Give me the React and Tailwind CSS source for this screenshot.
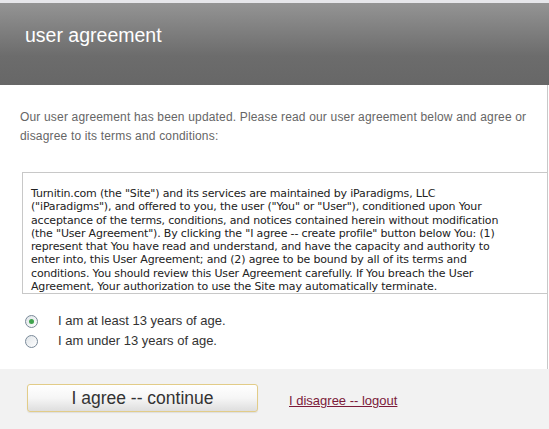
const agreementLines = [
  'Turnitin.com (the "Site") and its services are maintained by iParadigms, LLC',
  '("iParadigms"), and offered to you, the user ("You" or "User"), conditioned upon Your',
  'acceptance of the terms, conditions, and notices contained herein without modification',
  '(the "User Agreement"). By clicking the "I agree -- create profile" button below You: (1)',
  'represent that You have read and understand, and have the capacity and authority to',
  'enter into, this User Agreement; and (2) agree to be bound by all of its terms and',
  'conditions. You should review this User Agreement carefully. If You breach the User',
  'Agreement, Your authorization to use the Site may automatically terminate.',
]

const Radio = ({ checked }) => (
  <span className="w-[13px] h-[13px] rounded-full border border-[#7a8a99] bg-gradient-to-br from-[#dfe4e8] to-white flex items-center justify-center">
    {checked && <span className="w-[5px] h-[5px] rounded-full bg-[#3fa34d]" />}
  </span>
)

const App = () => {
  return (
    <div className="w-[549px] h-[429px] bg-white overflow-hidden font-['Liberation_Sans',Arial,sans-serif]">
      <div className="h-[3px] bg-[#e6e6ea]" />

      {/* Header */}
      <header className="h-[82px] bg-gradient-to-b from-[#949494] via-[#6c6c6c] via-65% to-[#676767] px-[25px] pt-[20px]">
        <h1 className="text-[19.5px] leading-[24px] text-white">user agreement</h1>
      </header>

      {/* Body */}
      <div className="w-[548px] border-r border-[#c8c8c8] h-[284px]">
        <p className="pl-[20px] pt-[23px] text-[12px] leading-[19px] tracking-[0.17px] text-[#666]">
          Our user agreement has been updated. Please read our user agreement below and agree or
          <br />
          disagree to its terms and conditions:
        </p>

        <div className="ml-[22px] mt-[26px] h-[122px] border-t border-l border-b border-[#c8c8c8] overflow-hidden pl-[8px] pt-[14px]">
          <div className="font-['DejaVu_Sans',Verdana,sans-serif] text-[11px] leading-[13.3px] text-[#222] whitespace-nowrap tracking-[-0.17px]">
            {agreementLines.map((line) => (
              <div key={line}>{line}</div>
            ))}
          </div>
        </div>

        <div className="mt-[20px] pl-[25px] flex flex-col gap-[6px] text-[13px] text-[#333]">
          <label className="flex items-center h-[14px]">
            <Radio checked />
            <span className="ml-[20px]">I am at least 13 years of age.</span>
          </label>
          <label className="flex items-center h-[14px]">
            <Radio />
            <span className="ml-[20px]">I am under 13 years of age.</span>
          </label>
        </div>
      </div>

      {/* Footer */}
      <footer className="h-[60px] bg-[#f2f2f2] flex items-start pl-[27px] pt-[15px]">
        <button className="w-[231px] h-[28px] rounded-[3px] border border-[#e2cc88] bg-gradient-to-b from-white via-[#f6f6f6] to-[#dedede] text-[17.5px] text-[#333] shadow-[0_1px_1px_rgba(0,0,0,0.08)]">
          I agree -- continue
        </button>
        <a href="#" className="ml-[31px] mt-[7px] text-[13px] text-[#7b1a3a] underline">
          I disagree -- logout
        </a>
      </footer>
    </div>
  )
}

export default App
